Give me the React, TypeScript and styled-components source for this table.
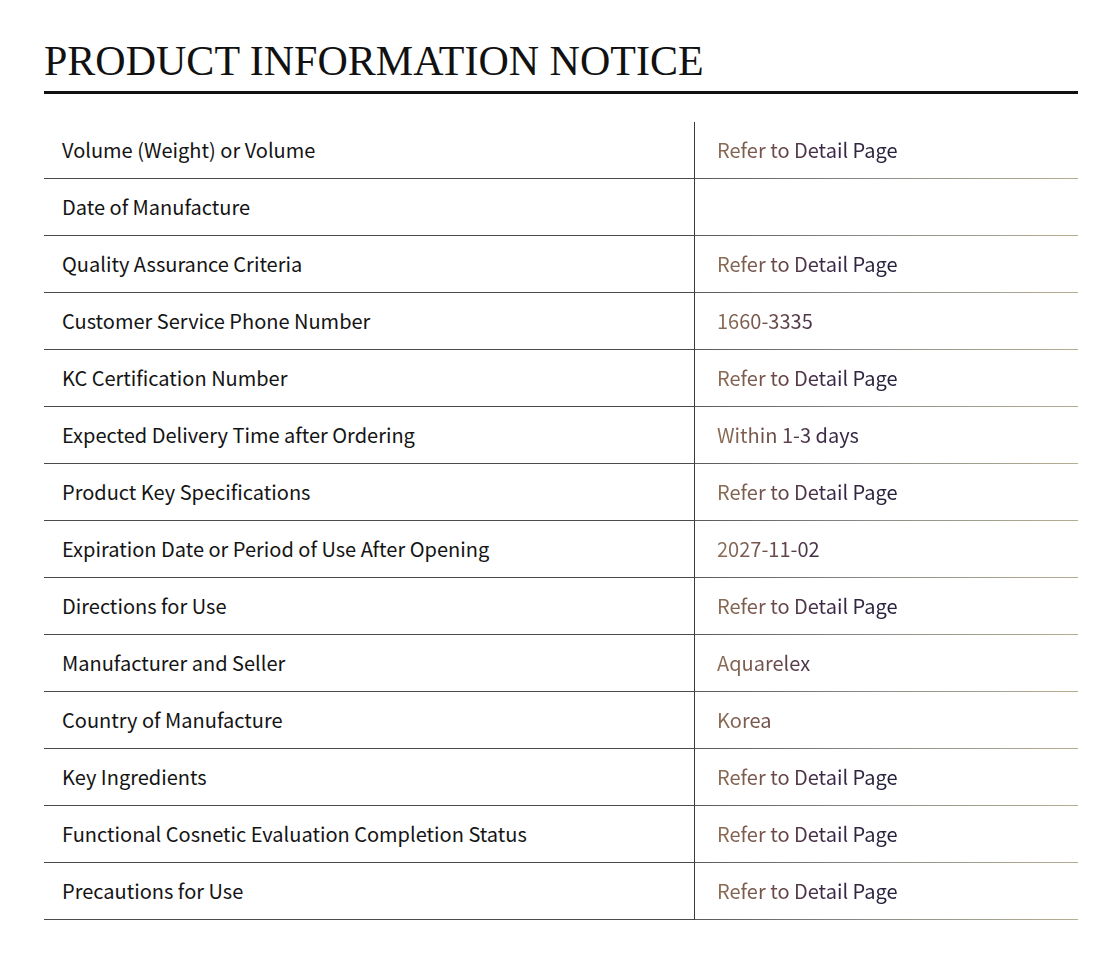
import React from "react";
import styled, { createGlobalStyle } from "styled-components";

const GlobalStyle = createGlobalStyle`
  html, body { margin: 0; padding: 0; background: #ffffff; }
  body { font-family: "Noto Sans CJK KR", "Noto Sans", sans-serif; }
`;

const Page = styled.div`
  padding: 0 35px 0 44px;
  width: 1034px;
`;

const Title = styled.h1`
  margin: 0;
  padding-top: 36px;
  padding-bottom: 5px;
  font-family: "Liberation Serif", "Times New Roman", serif;
  font-weight: 400;
  font-size: 42px;
  line-height: 50px;
  color: #111;
  border-bottom: 3px solid #111;
`;

const Table = styled.div`
  margin-top: 28px;
  display: grid;
  grid-template-columns: 651px 1fr;
`;

const LabelCell = styled.div`
  display: flex;
  align-items: center;
  padding-left: 18px;
  padding-bottom: 2px;
  box-sizing: border-box;
  height: 57px;
  border-bottom: 1px solid #4a4a4a;
  border-right: 1px solid #3a3a3a;
  font-size: 20px;
  color: #141414;
`;

const ValueCell = styled.div`
  display: flex;
  align-items: center;
  padding-left: 22px;
  padding-bottom: 2px;
  box-sizing: border-box;
  height: 57px;
  border-bottom: 1px solid transparent;
  border-image: linear-gradient(90deg, #5a5a5a 0%, #8e918a 50%, #b5ae92 100%) 1;
  border-top: 0;
  border-left: 0;
  border-right: 0;
`;

const ValueText = styled.span`
  font-size: 20px;
  background: linear-gradient(90deg, #8c6e54 0px, #6e4c48 55px, #3e2a48 105px, #22203a 180px);
  -webkit-background-clip: text;
  background-clip: text;
  color: transparent;
  display: inline-block;
  width: 300px;
`;

const rows: [string, string][] = [
  ["Volume (Weight) or Volume", "Refer to Detail Page"],
  ["Date of Manufacture", ""],
  ["Quality Assurance Criteria", "Refer to Detail Page"],
  ["Customer Service Phone Number", "1660-3335"],
  ["KC Certification Number", "Refer to Detail Page"],
  ["Expected Delivery Time after Ordering", "Within 1-3 days"],
  ["Product Key Specifications", "Refer to Detail Page"],
  ["Expiration Date or Period of Use After Opening", "2027-11-02"],
  ["Directions for Use", "Refer to Detail Page"],
  ["Manufacturer and Seller", "Aquarelex"],
  ["Country of Manufacture", "Korea"],
  ["Key Ingredients", "Refer to Detail Page"],
  ["Functional Cosnetic Evaluation Completion Status", "Refer to Detail Page"],
  ["Precautions for Use", "Refer to Detail Page"],
];

export default function App() {
  return (
    <>
      <GlobalStyle />
      <Page>
        <Title>PRODUCT INFORMATION NOTICE</Title>
        <Table>
          {rows.map(([label, value]) => (
            <React.Fragment key={label}>
              <LabelCell>{label}</LabelCell>
              <ValueCell>
                <ValueText>{value}</ValueText>
              </ValueCell>
            </React.Fragment>
          ))}
        </Table>
      </Page>
    </>
  );
}
